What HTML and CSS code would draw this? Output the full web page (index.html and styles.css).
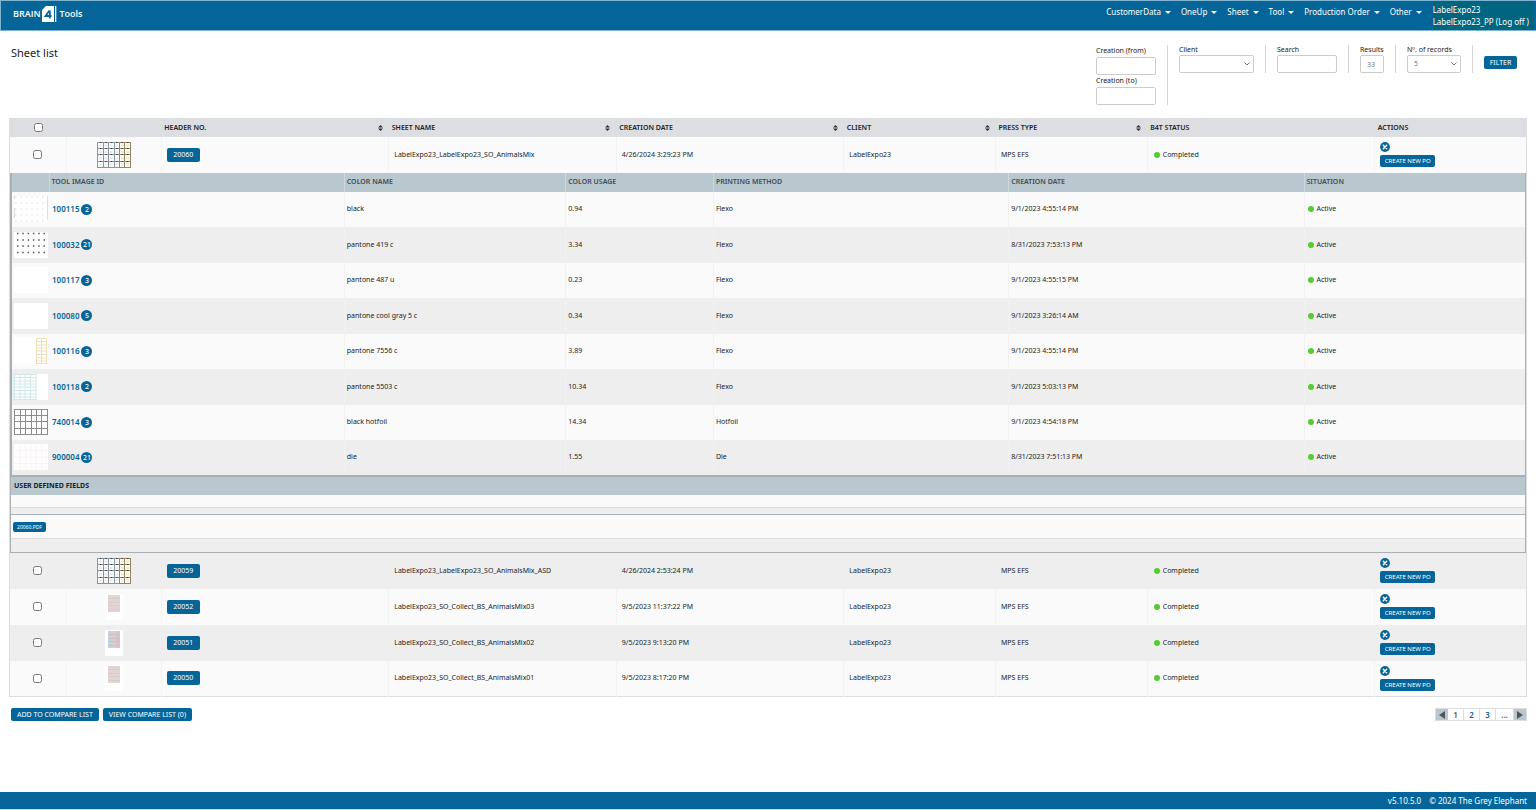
FILE: index.html
```
<!DOCTYPE html>
<html lang="en">
<head>
<meta charset="utf-8">
<title>Sheet list</title>
<link rel="stylesheet" href="styles.css">
</head>
<body>
<svg class="defs" aria-hidden="true">
  <symbol id="mix" viewBox="0 0 34 26">
    <rect width="34" height="26" rx="1" fill="#fdfdfd"/>
    <path d="M.5.5H22M.5 6.5H22M.5 12.500H22M.5 19.500H22M.5 25.500H22M.5 0V26M6.500 0V26M11.500 0V26M17.500 0V26" stroke="#8b939a" fill="none"/>
    <path d="M22 .5H33.500M22 6.500H33.500M22 12.500H33.500M22 19.500H33.500M22 25.500H33.500M22.500 0V26M27.500 0V26M33.500 0V26" stroke="#94865f" fill="none"/>
    <path d="M2 3.500H22M2 10H22M2 16.500H22M2 22.500H22" stroke="#e3ebee" stroke-width="2" stroke-dasharray="3 2.400"/>
    <path d="M24 3.500H33M24 10H33M24 16.500H33M24 22.500H33" stroke="#f3e8c8" stroke-width="2" stroke-dasharray="3 2.400"/>
    <path d="M3 6.500H33M3 12.500H33M3 19.500H33M3 .5H33" stroke="#3a4046" stroke-dasharray="1.500 3.900"/>
  </symbol>
  <symbol id="collect" viewBox="0 0 18 26">
    <rect width="18" height="26" fill="#fff"/>
    <rect x="3" y="1" width="12" height="17" fill="#e3d3d2"/>
    <path d="M3 4.500H15M3 8.500H15M3 11.500H15M3 15.500H15" stroke="#d8cccc"/>
  </symbol>
  <symbol id="collect2" viewBox="0 0 18 26">
    <rect width="18" height="26" fill="#fff"/>
    <rect x="3" y="1" width="4" height="17" fill="#c5d5dc"/>
    <rect x="7" y="1" width="4" height="17" fill="#d6cdd3"/>
    <rect x="11" y="1" width="4" height="17" fill="#dcc2c2"/>
    <path d="M3 4.500H15M3 8.500H15M3 11.500H15M3 15.500H15" stroke="#c9c2c8"/>
  </symbol>
  <symbol id="t-black" viewBox="0 0 34 26">
    <rect width="34" height="26" fill="#fff"/>
    <path d="M1 1H33M1 7H33M1 13H33M1 19H33M1 25H33" stroke="#e8e8e8" stroke-width="1.500" stroke-dasharray="1.500 3.900"/>
    <path d="M.5 0V3M.5 12V22M33.500 0V24" stroke="#ddd"/>
  </symbol>
  <symbol id="t-dots" viewBox="0 0 34 26">
    <rect width="34" height="26" fill="#fff"/>
    <path d="M3 1.500H33M3 8H33M3 14H33M3 20.500H33" stroke="#555" stroke-width="1.500" stroke-dasharray="1.500 3.800"/>
  </symbol>
  <symbol id="t-blank" viewBox="0 0 34 26">
    <rect width="34" height="26" fill="#fff"/>
    <path d="M2 7H32M2 14H32M2 20H32" stroke="#fdfdfd"/>
  </symbol>
  <symbol id="t-yellow" viewBox="0 0 34 26">
    <rect width="34" height="26" fill="#fff"/>
    <path d="M22 .5H33M22 3.500H33M22 7H33M22 10H33M22 13H33M22 16.500H33M22 20H33M22 23H33M22 25.500H33M22.500 0V26M27.500 0V26M32.500 0V26" stroke="#eee0b6" fill="none"/>
  </symbol>
  <symbol id="t-teal" viewBox="0 0 34 26">
    <rect width="34" height="26" fill="#fff"/>
    <path d="M0 .5H22M0 3.500H22M0 7H22M0 10H22M0 13H22M0 16.500H22M0 20H22M0 23H22M0 25.500H22M.5 0V26M6 0V26M11 0V26M16.500 0V26M22 0V26" stroke="#d0e8e7" fill="none"/>
  </symbol>
  <symbol id="t-foil" viewBox="0 0 34 26">
    <rect width="34" height="26" fill="#fff"/>
    <path d="M0 .5H34M0 6.500H34M0 12.500H34M0 19.500H34M0 25.500H34M.5 0V26M6.500 0V26M11.500 0V26M17.500 0V26M22.500 0V26M27.500 0V26M33.500 0V26" stroke="#8c8c8c" fill="none"/>
  </symbol>
  <symbol id="t-die" viewBox="0 0 34 26">
    <rect width="34" height="26" fill="#fffdfe"/>
    <path d="M0 6.500H34M0 13H34M0 19.500H34M6 0V26M11.500 0V26M17 0V26M22 0V26M27.500 0V26" stroke="#fbf4f5" fill="none"/>
  </symbol>
  <symbol id="cross" viewBox="0 0 10 10">
    <circle cx="5" cy="5" r="4.900" fill="#056598"/>
    <path d="M3.300 3.300 6.700 6.700M6.700 3.300 3.300 6.700" stroke="#fff" stroke-width="1.500" stroke-linecap="round"/>
  </symbol>
  <symbol id="sort" viewBox="0 0 5 6"><path d="M0 2.500 2.500 0 5 2.500ZM0 3.500H5L2.500 6Z" fill="#333"/></symbol>
</svg>

<header class="topbar">
  <a class="logo" href="#" aria-label="Brain 4 Tools">
    <span>BRAIN</span>
    <svg class="logo-mark" viewBox="0 0 15 16" aria-hidden="true">
      <path d="M4 0H12V16H0V4Z" fill="#fff"/>
      <path d="M7.500 4.500 3.500 10H9.500M7.800 4.500V12.500" stroke="#056598" stroke-width="1.800" fill="none"/>
      <path d="M13.700 0V16" stroke="#fff" stroke-width="1.200"/>
    </svg>
    <span>Tools</span>
  </a>
  <nav class="menu">
    <button type="button">CustomerData</button>
    <button type="button">OneUp</button>
    <button type="button">Sheet</button>
    <button type="button">Tool</button>
    <button type="button">Production Order</button>
    <button type="button">Other</button>
  </nav>
  <div class="user"><span>LabelExpo23</span><span>LabelExpo23_PP <a href="#">(Log off )</a></span></div>
</header>

<main class="page">
  <section class="head">
    <h1>Sheet list</h1>
    <form class="filters">
      <div class="group dates">
        <label for="from">Creation (from)</label><input id="from" type="text">
        <label for="to">Creation (to)</label><input id="to" type="text">
      </div>
      <div class="group client"><label for="client">Client</label><select id="client"><option></option></select></div>
      <div class="group search"><label for="search">Search</label><input id="search" type="text"></div>
      <div class="group results"><label for="results">Results</label><input id="results" type="text" value="33"></div>
      <div class="group records"><label for="records">Nº. of records</label><select id="records"><option>5</option></select></div>
      <button type="button" class="btn filter">FILTER</button>
    </form>
  </section>

  <table class="sheets">
    <colgroup><col class="c-check"><col class="c-thumb"><col class="c-wide"><col class="c-wide"><col class="c-wide"><col class="c-mid"><col class="c-mid"><col class="c-wide"><col class="c-mid"></colgroup>
    <thead>
      <tr>
        <th class="center"><input type="checkbox" aria-label="Select all"></th>
        <th></th>
        <th><span class="sortable">HEADER NO.<svg><use href="#sort"/></svg></span></th>
        <th><span class="sortable">SHEET NAME<svg><use href="#sort"/></svg></span></th>
        <th><span class="sortable">CREATION DATE<svg><use href="#sort"/></svg></span></th>
        <th><span class="sortable">CLIENT<svg><use href="#sort"/></svg></span></th>
        <th><span class="sortable">PRESS TYPE<svg><use href="#sort"/></svg></span></th>
        <th>B4T STATUS</th>
        <th>ACTIONS</th>
      </tr>
    </thead>
    <tbody>
      <tr class="sheet">
        <td class="center"><input type="checkbox" aria-label="Select 20060"></td>
        <td class="center"><svg class="thumb"><use href="#mix"/></svg></td>
        <td><a class="btn number" href="#">20060</a></td>
        <td>LabelExpo23_LabelExpo23_SO_AnimalsMix</td>
        <td>4/26/2024 3:29:23 PM</td>
        <td>LabelExpo23</td>
        <td>MPS EFS</td>
        <td><span class="status">Completed</span></td>
        <td><div class="actions"><button type="button" class="cancel" aria-label="Cancel"><svg><use href="#cross"/></svg></button><button type="button" class="btn po">CREATE NEW PO</button></div></td>
      </tr>
      <tr class="expanded">
        <td colspan="9">
          <table class="tools">
            <colgroup><col class="t-img"><col class="t-a"><col class="t-b"><col class="t-c"><col class="t-a"><col class="t-a"><col class="t-b"></colgroup>
            <thead>
              <tr><th></th><th>TOOL IMAGE ID</th><th>COLOR NAME</th><th>COLOR USAGE</th><th>PRINTING METHOD</th><th>CREATION DATE</th><th>SITUATION</th></tr>
            </thead>
            <tbody>
              <tr><td class="center"><svg class="thumb"><use href="#t-black"/></svg></td><td><span class="tool"><a href="#">100115</a><span class="count">2</span></span></td><td>black</td><td>0.94</td><td>Flexo</td><td>9/1/2023 4:55:14 PM</td><td><span class="status">Active</span></td></tr>
              <tr><td class="center"><svg class="thumb"><use href="#t-dots"/></svg></td><td><span class="tool"><a href="#">100032</a><span class="count">21</span></span></td><td>pantone 419 c</td><td>3.34</td><td>Flexo</td><td>8/31/2023 7:53:13 PM</td><td><span class="status">Active</span></td></tr>
              <tr><td class="center"><svg class="thumb"><use href="#t-blank"/></svg></td><td><span class="tool"><a href="#">100117</a><span class="count">3</span></span></td><td>pantone 487 u</td><td>0.23</td><td>Flexo</td><td>9/1/2023 4:55:15 PM</td><td><span class="status">Active</span></td></tr>
              <tr><td class="center"><svg class="thumb"><use href="#t-blank"/></svg></td><td><span class="tool"><a href="#">100080</a><span class="count">5</span></span></td><td>pantone cool gray 5 c</td><td>0.34</td><td>Flexo</td><td>9/1/2023 3:26:14 AM</td><td><span class="status">Active</span></td></tr>
              <tr><td class="center"><svg class="thumb"><use href="#t-yellow"/></svg></td><td><span class="tool"><a href="#">100116</a><span class="count">3</span></span></td><td>pantone 7556 c</td><td>3.89</td><td>Flexo</td><td>9/1/2023 4:55:14 PM</td><td><span class="status">Active</span></td></tr>
              <tr><td class="center"><svg class="thumb"><use href="#t-teal"/></svg></td><td><span class="tool"><a href="#">100118</a><span class="count">2</span></span></td><td>pantone 5503 c</td><td>10.34</td><td>Flexo</td><td>9/1/2023 5:03:13 PM</td><td><span class="status">Active</span></td></tr>
              <tr><td class="center"><svg class="thumb"><use href="#t-foil"/></svg></td><td><span class="tool"><a href="#">740014</a><span class="count">3</span></span></td><td>black hotfoil</td><td>14.34</td><td>Hotfoil</td><td>9/1/2023 4:54:18 PM</td><td><span class="status">Active</span></td></tr>
              <tr><td class="center"><svg class="thumb"><use href="#t-die"/></svg></td><td><span class="tool"><a href="#">900004</a><span class="count">21</span></span></td><td>die</td><td>1.55</td><td>Die</td><td>8/31/2023 7:51:13 PM</td><td><span class="status">Active</span></td></tr>
            </tbody>
          </table>
          <section class="fields"><h2>USER DEFINED FIELDS</h2><div class="fields-body"></div></section>
          <section class="files"><div class="files-body"><a class="btn pdf" href="#">20060.PDF</a></div></section>
        </td>
      </tr>
      <tr class="sheet alt">
        <td class="center"><input type="checkbox" aria-label="Select 20059"></td>
        <td class="center"><svg class="thumb"><use href="#mix"/></svg></td>
        <td><a class="btn number" href="#">20059</a></td>
        <td>LabelExpo23_LabelExpo23_SO_AnimalsMix_ASD</td>
        <td>4/26/2024 2:53:24 PM</td>
        <td>LabelExpo23</td>
        <td>MPS EFS</td>
        <td><span class="status">Completed</span></td>
        <td><div class="actions"><button type="button" class="cancel" aria-label="Cancel"><svg><use href="#cross"/></svg></button><button type="button" class="btn po">CREATE NEW PO</button></div></td>
      </tr>
      <tr class="sheet">
        <td class="center"><input type="checkbox" aria-label="Select 20052"></td>
        <td class="center"><svg class="thumb"><use href="#collect"/></svg></td>
        <td><a class="btn number" href="#">20052</a></td>
        <td>LabelExpo23_SO_Collect_BS_AnimalsMix03</td>
        <td>9/5/2023 11:37:22 PM</td>
        <td>LabelExpo23</td>
        <td>MPS EFS</td>
        <td><span class="status">Completed</span></td>
        <td><div class="actions"><button type="button" class="cancel" aria-label="Cancel"><svg><use href="#cross"/></svg></button><button type="button" class="btn po">CREATE NEW PO</button></div></td>
      </tr>
      <tr class="sheet alt">
        <td class="center"><input type="checkbox" aria-label="Select 20051"></td>
        <td class="center"><svg class="thumb"><use href="#collect2"/></svg></td>
        <td><a class="btn number" href="#">20051</a></td>
        <td>LabelExpo23_SO_Collect_BS_AnimalsMix02</td>
        <td>9/5/2023 9:13:20 PM</td>
        <td>LabelExpo23</td>
        <td>MPS EFS</td>
        <td><span class="status">Completed</span></td>
        <td><div class="actions"><button type="button" class="cancel" aria-label="Cancel"><svg><use href="#cross"/></svg></button><button type="button" class="btn po">CREATE NEW PO</button></div></td>
      </tr>
      <tr class="sheet">
        <td class="center"><input type="checkbox" aria-label="Select 20050"></td>
        <td class="center"><svg class="thumb"><use href="#collect"/></svg></td>
        <td><a class="btn number" href="#">20050</a></td>
        <td>LabelExpo23_SO_Collect_BS_AnimalsMix01</td>
        <td>9/5/2023 8:17:20 PM</td>
        <td>LabelExpo23</td>
        <td>MPS EFS</td>
        <td><span class="status">Completed</span></td>
        <td><div class="actions"><button type="button" class="cancel" aria-label="Cancel"><svg><use href="#cross"/></svg></button><button type="button" class="btn po">CREATE NEW PO</button></div></td>
      </tr>
    </tbody>
  </table>

  <div class="below">
    <div class="compare">
      <button type="button" class="btn">ADD TO COMPARE LIST</button>
      <button type="button" class="btn">VIEW COMPARE LIST (0)</button>
    </div>
    <nav class="pager" aria-label="Pages">
      <button type="button" class="arrow" aria-label="Previous"><svg viewBox="0 0 6 8"><path d="M6 0V8L0 4Z"/></svg></button>
      <span class="current">1</span><a href="#">2</a><a href="#">3</a><a href="#" class="more">...</a>
      <button type="button" class="arrow" aria-label="Next"><svg viewBox="0 0 6 8"><path d="M0 0V8L6 4Z"/></svg></button>
    </nav>
  </div>
</main>

<footer class="footer"><span>v5.10.5.0</span><span>© 2024 The Grey Elephant</span></footer>
</body>
</html>
```
FILE: styles.css
```
* { box-sizing: border-box; }

body {
  margin: 0;
  min-height: 100vh;
  display: flex;
  flex-direction: column;
  background: #fff;
  color: #222;
  font: 7px/10px "Noto Sans", "Open Sans", sans-serif;
}

a { color: inherit; text-decoration: none; }
button, input, select { font: inherit; color: inherit; }
button { border: 0; padding: 0; background: none; cursor: pointer; }
.defs { display: none; }

/* top bar */
.topbar {
  display: flex;
  height: 31px;
  padding-right: 2px;
  border: 1px solid #7fb4d0;
  border-width: 1px 0 1px 1px;
  background: #056598;
  color: #fff;
  font-size: 8px;
}
.logo {
  display: flex;
  align-items: center;
  gap: 2px;
  height: 26px;
  margin-right: auto;
  padding-left: 12px;
  font: 600 9px/16px "Open Sans", sans-serif;
}
.logo-mark { width: 15px; height: 16px; }
.menu { display: flex; height: 22px; gap: 10px; margin-right: 11px; }
.menu button { display: flex; align-items: center; gap: 4px; }
.menu button::after {
  content: "";
  border: 3px solid transparent;
  border-top-color: #fff;
  border-bottom: 0;
}
.user {
  display: flex;
  flex-direction: column;
  padding: 3px 5px 0 0;
  line-height: 12px;
  background: #00667f;
}

/* title and filters */
.page { flex: 1; padding: 14px 9px 0; }
.head { display: flex; justify-content: space-between; height: 73px; }
.head h1 { margin: 0; padding-left: 2px; font-size: 11px; line-height: 16px; font-weight: 400; }
.filters { display: flex; align-items: flex-start; padding-right: 10px; }
.group {
  display: flex;
  flex-direction: column;
  height: 28px;
  margin-right: 11px;
  padding-right: 11px;
  border-right: 1px solid #d4d4d4;
}
.group label { white-space: nowrap; }
.group input, .group select {
  width: 100%;
  height: 18px;
  padding: 0 6px;
  border: 1px solid #ccc;
  border-radius: 2px;
  background: #fff;
  color: #777;
}
.group select {
  appearance: none;
  background: #fff url("data:image/svg+xml,%3Csvg xmlns='http://www.w3.org/2000/svg' viewBox='0 0 6 4'%3E%3Cpath d='M.5.5 3 3 5.500.5' fill='none' stroke='%23777'/%3E%3C/svg%3E") no-repeat right 3px center / 6px 4px;
}
.dates { width: 72px; height: 60px; }
.dates label { line-height: 12px; }
.client { width: 87px; }
.search { width: 72px; }
.results { width: 36px; }
.records { width: 66px; }

.btn {
  display: inline-block;
  border-radius: 2px;
  background: #056598;
  color: #fff;
  text-align: center;
  white-space: nowrap;
}
.filter { width: 33px; height: 13px; margin-top: 11px; }

/* tables */
table { width: 100%; table-layout: fixed; border-collapse: collapse; }
th { height: 18px; padding: 0 3px; text-align: left; font-weight: 600; }
td { padding: 0 5px; }
.center { padding: 0; text-align: center; }
.center input { display: block; width: 9px; height: 9px; margin: 0 auto; }
.sheets { border: 1px solid #dcdde0; }
.sheets > thead { background: #dcdee1; }
.c-check { width: 3.75%; }
.c-thumb { width: 6.25%; }
.c-wide { width: 15%; }
.c-mid { width: 10%; }
.sheet { height: 36px; background: #fafafa; }
.sheet td + td { border-left: 1px solid #f3f3f3; }
.sheet.alt { background: #eee; }
.sheet.alt td + td { border-left-color: #eee; }
.sortable { display: flex; align-items: center; justify-content: space-between; }
.sortable svg { width: 5px; height: 6px; margin-right: 3px; }
.thumb { display: block; width: 34px; height: 26px; margin: 0 auto; }
.number { width: 33px; height: 14px; line-height: 14px; }
.status { display: flex; align-items: center; gap: 3px; padding-left: 1px; }
.status::before { content: ""; width: 6px; height: 6px; border-radius: 50%; background: #5c3; }
.actions { display: flex; flex-direction: column; align-items: flex-start; gap: 3px; }
.cancel svg { display: block; width: 10px; height: 10px; }
.po { width: 55px; height: 12px; font-size: 6px; }

/* expanded record */
.expanded > td { padding: 0; }
.tools { border: 1px solid #a8b0b5; border-width: 0 1px 2px 2px; }
.tools thead { background: #b9c7ce; color: #444b52; }
.tools th + th { border-left: 1px solid #cdd7dc; }
.tools th { height: 19px; padding: 0 2px; }
.t-img { width: 38px; }
.t-a { width: 20%; }
.t-b { width: 15%; }
.t-c { width: 10%; }
.tools td { padding: 0 2px; }
.tools td.center { padding: 0; }
.tools td + td + td { border-left: 1px solid #f1f1f1; }
.tools tbody tr { height: 35px; background: #fafafa; }
.tools tbody tr:nth-child(even) { height: 36px; background: #eee; }
.tool { display: flex; align-items: center; gap: 2px; padding-left: 1px; }
.tool a { color: #056598; font-size: 8px; font-weight: 600; }
.count {
  width: 11px;
  height: 11px;
  border-radius: 50%;
  background: #056598;
  color: #fff;
  font-weight: 500;
  line-height: 11px;
  text-align: center;
}
.fields, .files { border: 1px solid #a8b0b5; border-width: 0 1px 1px; background: #eee; }
.fields { padding-bottom: 6px; }
.fields h2 { margin: 0; padding-left: 3px; background: #b9c7ce; font-size: 7px; line-height: 18px; font-weight: 700; }
.fields-body { height: 13px; background: #fafafa; border-bottom: 1px solid #ddd; }
.files { padding-bottom: 13px; }
.files-body { display: flex; align-items: center; height: 24px; padding: 2px 0 0 2px; background: #fafafa; border-bottom: 1px solid #ddd; }
.pdf { width: 33px; font-size: 5px; line-height: 10px; }

/* below the table */
.below { display: flex; justify-content: space-between; padding: 11px 0 0 2px; }
.compare { display: flex; gap: 4px; }
.compare .btn { height: 13px; padding: 0 6px; }
.pager { display: flex; border: 1px solid #ddd; height: 13px; font-size: 8px; font-weight: 600; line-height: 11px; color: #056598; }
.pager span, .pager a { width: 16px; border-right: 1px solid #ddd; text-align: center; }
.pager .current { color: #555; }
.pager .more { width: 18px; }
.arrow { display: flex; align-items: center; justify-content: center; width: 12px; background: #b9c7ce; }
.arrow svg { width: 6px; height: 8px; fill: #555; }

.footer {
  display: flex;
  justify-content: flex-end;
  gap: 8px;
  padding-right: 9px;
  border-bottom: 1px solid #cfe0ea;
  background: #056598;
  color: #fff;
  font-size: 8px;
  line-height: 17px;
}
```
